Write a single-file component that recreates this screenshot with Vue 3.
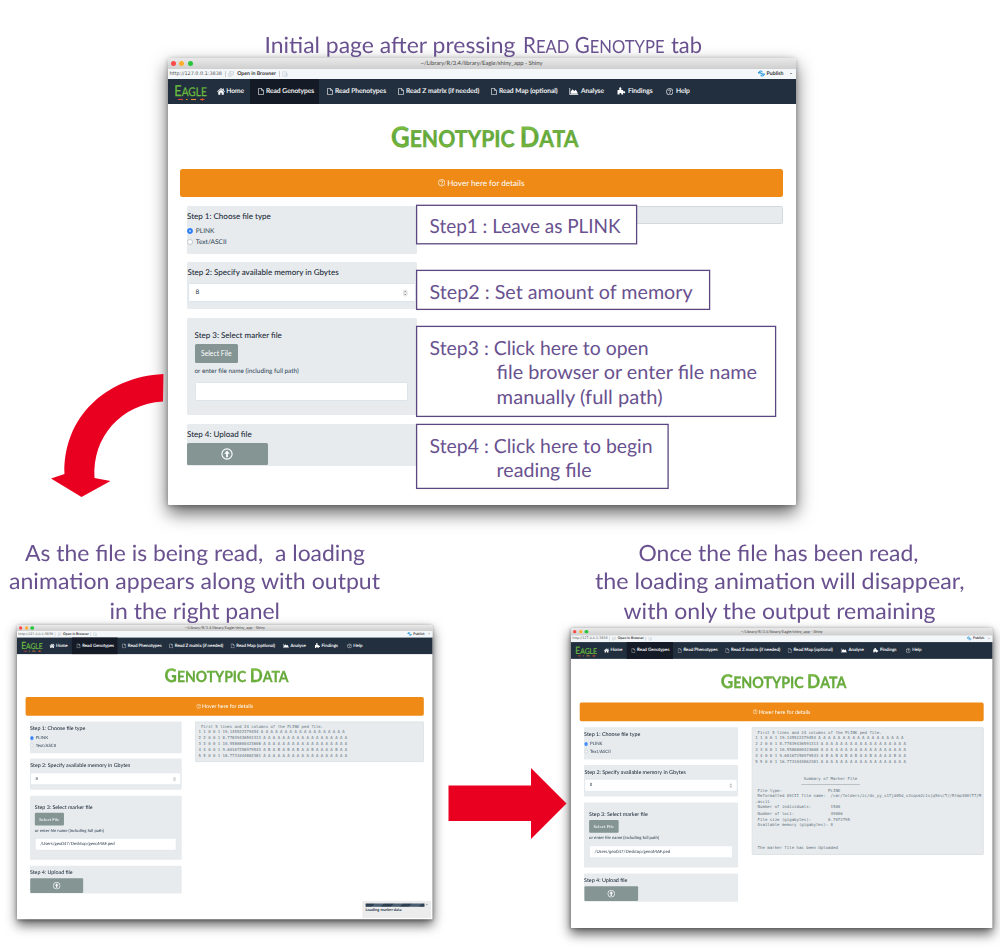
<script setup>
const navItems = [
  { icon: 'home', label: 'Home' },
  { icon: 'file', label: 'Read Genotypes', active: true },
  { icon: 'file', label: 'Read Phenotypes' },
  { icon: 'file', label: 'Read Z matrix (if needed)' },
  { icon: 'file', label: 'Read Map (optional)' },
  { icon: 'chart', label: 'Analyse' },
  { icon: 'puzzle', label: 'Findings' },
  { icon: 'help', label: 'Help' },
]

const head = [
  ' First 5 lines and 24 columns of the PLINK ped file.',
  '1 1 0 0 1 19.145522379454 A A A A A A A A A A A A A A A A A A',
  '2 2 0 0 1 8.77839436591313 A A A A A A A A A A A A A A A A A A',
  '3 3 0 0 1 10.5586800423608 A A A A A A A A A A A A A A A A A A',
  '4 4 0 0 1 9.60167258979543 A B A B A B A B A A B A A A A B A A',
  '5 5 0 0 1 16.7731044862381 A A A A A A A A A A A A A A A A A A',
]
const summary = [
  '',
  '',
  '                    Summary of Marker File',
  '                   ' + '─'.repeat(24),
  ' File type:                   PLINK',
  ' Reformatted ASCII file name:  /var/folders/zc/ds_yy_s17jd05d_s3sqsm2c1xjq5kv/T//Rtmp300tT7/M',
  '.ascii',
  ' Number of individuals:        1500',
  ' Number of loci:               49006',
  ' File size (gigabytes):       0.7072795',
  ' Available memory (gigabytes): 8',
  '',
  '',
  '',
  ' The marker file has been Uploaded',
]

const windows = [
  { id: 'start', path: '', output: '' },
  { id: 'reading', path: '/Users/geo047/Desktop/genoMAF.ped', output: head.join('\n'), loading: true },
  { id: 'done', path: '/Users/geo047/Desktop/genoMAF.ped', output: [...head, ...summary].join('\n') },
]

const captions = [
  { text: 'Initial page after pressing', x: 264.5, y: 52.7, w: 251 },
  { text: 'tab', x: 671, y: 52.7, w: 31 },
  { text: 'As the file is being read,  a loading', x: 25, y: 561, w: 340 },
  { text: 'animation appears along with output', x: 9, y: 589, w: 371 },
  { text: 'in the right panel', x: 109.5, y: 619, w: 170.5 },
  { text: 'Once the file has been read,', x: 638.5, y: 561, w: 280 },
  { text: 'the loading animation will disappear,', x: 595, y: 589, w: 369.5 },
  { text: 'with only the output remaining', x: 623.5, y: 619, w: 312 },
]

const callouts = [
  { x: 416.6, y: 205.3, w: 220, h: 38.5, lines: [{ t: 'Step1 : Leave as PLINK', x: 13, y: 27.5, w: 191 }] },
  { x: 416.6, y: 270.4, w: 293, h: 39, lines: [{ t: 'Step2 : Set amount of memory', x: 13, y: 28.5, w: 263 }] },
  {
    x: 416.6, y: 326.4, w: 359, h: 90,
    lines: [
      { t: 'Step3 : Click here to open', x: 13, y: 28.5, w: 219 },
      { t: 'file browser or enter file name', x: 80, y: 52.4, w: 260.5 },
      { t: 'manually (full path)', x: 80, y: 77.4, w: 166 },
    ],
  },
  {
    x: 416.6, y: 424.4, w: 251.5, h: 64,
    lines: [
      { t: 'Step4 : Click here to begin', x: 13, y: 28.4, w: 223 },
      { t: 'reading file', x: 80, y: 53, w: 95 },
    ],
  },
]
</script>

<template>
  <main class="slide">
    <section v-for="win in windows" :key="win.id" class="window" :class="win.id">
      <header class="titlebar">
        <span class="lights"><i class="red" /><i class="amber" /><i class="green" /></span>
        <span>~/Library/R/3.4/library/Eagle/shiny_app - Shiny</span>
      </header>
      <div class="toolbar">
        <span class="url">http://127.0.0.1:3838</span>
        <i class="sep" />
        <svg class="mini" viewBox="0 0 8 8"><path d="M2 2V1h5v4H5M1 3h3v4H1z" fill="none" stroke="#b5bcc4" stroke-width=".8" /></svg>
        <b>Open in Browser</b>
        <i class="sep" />
        <svg class="mini" viewBox="0 0 8 8"><path d="M1 1h5v6H1zM3 3.5h4v3H3" fill="none" stroke="#c3ccd8" stroke-width=".8" /></svg>
        <span class="publish">
          <svg viewBox="0 0 10 10"><path d="M1.5 3.3C2.5 .8 5.5 .8 6 3.5M4 6.5C4.5 9.500 8 9 8.500 6.700" fill="none" stroke="#2f9bdb" stroke-width="1.500" /><path d="M0 3h4v2H0zM5.500 5H10v1.800H5.500zM4 4.200h2v1.600H4z" fill="#2f9bdb" /></svg>
          <b>Publish</b><i class="caret" />
        </span>
      </div>

      <nav class="nav">
        <svg class="logo" viewBox="0 0 42 25.5">
          <text x="6.300" y="17.300" textLength="32.500" lengthAdjust="spacingAndGlyphs"><tspan font-size="15">E</tspan><tspan font-size="12">AGLE</tspan></text>
          <g stroke-width="1.100"><path d="M10 20.500h5" stroke="#d9483b" /><path d="M18 20.500h1.500" stroke="#f39c12" /><path d="M23 20.500h5" stroke="#e8913a" /><path d="M32 20.500h4.500M34.300 19.200v2.600" stroke="#e0552f" /></g>
        </svg>
        <a v-for="item in navItems" :key="item.label" :class="[item.icon, { active: item.active }]">
          <svg v-if="item.icon === 'home'" viewBox="0 0 16 14"><path d="M8 0L0 7l1 1.200L8 2.300l7 5.900L16 7l-2.500-2.200V1h-2v2zM8 3.600L2.500 8.200V13.500H6.600V9.500h2.800v4h4.100V8.200z" fill="#fff" /></svg>
          <svg v-else-if="item.icon === 'file'" viewBox="0 0 12 14"><path d="M1 .8h6L11 4.800v8.400H1zM7 .8v4h4" fill="none" stroke="#fff" stroke-width="1.200" /></svg>
          <svg v-else-if="item.icon === 'chart'" viewBox="0 0 18 14"><path d="M1 0v13h17" fill="none" stroke="#fff" stroke-width="1.500" /><path d="M3 11.500V7l3.500-4.500L10 6l3-2.500 3 4.500 1 3.500z" fill="#fff" /></svg>
          <svg v-else-if="item.icon === 'puzzle'" viewBox="0 0 16 14"><path d="M1 5.500h3.800C3.500 3 4 .3 6.200.3S9 3 7.800 5.500h3.700v2.700c1.500-1 4-.8 4 1.300s-2.500 2.300-4 1.200V14H8c1-2-.2-3-1.500-3S4 12 5 14H1z" fill="#fff" /></svg>
          <svg v-else viewBox="0 0 14 14"><circle cx="7" cy="7" r="6.200" fill="none" stroke="#fff" stroke-width="1.300" /><path d="M4.800 5.400c.2-2.500 4.600-2.300 4.400.1C9.100 7 7.100 7 7.100 8.700M7.100 10v1.500" fill="none" stroke="#fff" stroke-width="1.500" /></svg>
          <span>{{ item.label }}</span>
        </a>
      </nav>

      <svg class="heading" viewBox="0 0 628 65">
        <defs>
          <linearGradient :id="'leaf-' + win.id" x1="0" y1="0" x2="0" y2="1"><stop offset="0" stop-color="#8ed04b" /><stop offset=".5" stop-color="#5fa637" /><stop offset="1" stop-color="#82c341" /></linearGradient>
        </defs>
        <text x="223" y="42.700" textLength="187.500" lengthAdjust="spacingAndGlyphs" :fill="`url(#leaf-${win.id})`"><tspan class="cap">G</tspan>ENOTYPIC <tspan class="cap">D</tspan>ATA</text>
      </svg>

      <div class="hover">
        <svg viewBox="0 0 14 14"><circle cx="7" cy="7" r="6.200" fill="none" stroke="#fff" stroke-width="1.300" /><path d="M4.800 5.400c.2-2.500 4.600-2.300 4.400.1C9.100 7 7.100 7 7.100 8.700M7.100 10v1.500" fill="none" stroke="#fff" stroke-width="1.500" /></svg>
        Hover here for details
      </div>

      <div class="columns">
        <div class="form">
          <div class="panel p1">
            <h3>Step 1: Choose file type</h3>
            <label><i class="radio on" />PLINK</label>
            <label><i class="radio" />Text/ASCII</label>
          </div>
          <div class="panel p2">
            <h3>Step 2: Specify available memory in Gbytes</h3>
            <div class="field">
              8
              <svg class="spin" viewBox="0 0 6 9"><rect x=".4" y=".4" width="5.200" height="8.200" rx="2.400" fill="#f5f5f5" stroke="#ccc" stroke-width=".6" /><path d="M1.800 3.500L3 2l1.200 1.500M1.800 5.500L3 7l1.200-1.500" fill="none" stroke="#555" stroke-width=".8" /></svg>
            </div>
          </div>
          <div class="panel p3">
            <h3>Step 3: Select marker file</h3>
            <button class="select">Select File</button>
            <p>or enter file name (including full path)</p>
            <div class="field">{{ win.path }}</div>
          </div>
          <div class="panel p4">
            <h3>Step 4: Upload file</h3>
            <button class="upload">
              <svg viewBox="0 0 12 12"><circle cx="6" cy="6" r="5.100" fill="none" stroke="#fff" stroke-width="1.100" /><path d="M6 2.500L3.200 5.700h1.900V9.300h1.800V5.700h1.900z" fill="#fff" /></svg>
            </button>
          </div>
        </div>
        <pre class="output">{{ win.output }}</pre>
      </div>

      <div v-if="win.loading" class="toast">
        <div class="progress"><i /><span>×</span></div>
        <b>Loading marker data</b>
      </div>
    </section>

    <svg class="overlay" viewBox="0 0 1000 952">
      <g class="arrows">
        <path d="M163.500 374C105 377 63 418 64.500 474L51 478.500L81.500 497L110.500 481L94.500 478C92 437 121 404 163 401.500Z" />
        <path d="M448.500 785.500H531V768L566.500 803.500L531 839V821H448.500Z" />
      </g>
      <g class="caption">
        <text v-for="c in captions" :key="c.text" :x="c.x" :y="c.y" :textLength="c.w" lengthAdjust="spacingAndGlyphs">{{ c.text }}</text>
        <text x="523" y="52.700" textLength="141.500" lengthAdjust="spacingAndGlyphs">R<tspan class="small">EAD</tspan> G<tspan class="small">ENOTYPE</tspan></text>
      </g>
      <g v-for="c in callouts" :key="c.y" class="callout" :transform="`translate(${c.x} ${c.y})`">
        <rect :width="c.w" :height="c.h" />
        <text v-for="l in c.lines" :key="l.t" :x="l.x" :y="l.y" :textLength="l.w" lengthAdjust="spacingAndGlyphs">{{ l.t }}</text>
      </g>
    </svg>
  </main>
</template>

<style>
body { margin: 0; background: #fff; }
</style>

<style scoped>
.slide {
  position: relative;
  width: 1000px;
  height: 952px;
  overflow: hidden;
  background: #fff;
  font-family: Lato, "Liberation Sans", sans-serif;
  text-rendering: geometricPrecision;
}
.slide * { box-sizing: border-box; }
.window {
  position: absolute;
  width: 628px;
  height: 447px;
  display: flex;
  flex-direction: column;
  transform-origin: 0 0;
  background: #fff;
  color: #2c3e50;
  border-radius: 3px 3px 1px 1px;
  box-shadow: 0 8px 18px rgba(0, 0, 0, .62), 0 1px 5px rgba(0, 0, 0, .25);
}
.start { left: 167.5px; top: 58px; }
.reading { left: 17px; top: 624.8px; height: 445px; transform: scale(.6615); }
.done { left: 570.7px; top: 628.2px; transform: scale(.671); }
.titlebar {
  position: relative;
  flex: none;
  height: 10.5px;
  display: flex;
  align-items: center;
  justify-content: center;
  border-radius: 3px 3px 0 0;
  background: linear-gradient(#e9e9e9, #cfcfcf);
  font-size: 5.8px;
  color: #444;
}
.reading .titlebar { height: 8.5px; }
.lights { position: absolute; left: 3px; display: flex; gap: 3.5px; }
.lights i { width: 5.2px; height: 5.2px; border-radius: 50%; }
.red { background: #fc4b48; }
.amber { background: #fdae2f; }
.green { background: #29c53a; }
.toolbar {
  flex: none;
  height: 10px;
  display: flex;
  align-items: center;
  gap: 2.9px;
  padding: 0 4px 0 2px;
  background: #f3f7f9;
  font-size: 5.2px;
  color: #333;
}
.url { font-family: "DejaVu Sans", sans-serif; font-size: 4.9px; color: #555; }
.sep { width: .6px; height: 6px; background: #ccc; }
.mini { width: 6px; height: 6px; }
.publish { margin-left: auto; display: flex; align-items: center; gap: 2px; }
.publish svg { width: 7px; height: 7px; }
.caret { margin-left: 4px; border: 1.3px solid transparent; border-top-color: #333; border-bottom: 0; }
.nav {
  flex: none;
  height: 25.5px;
  display: grid;
  grid-template-columns: 41.5px 41px 69px 71px 93px 78.5px 48px 49px 1fr;
  background: #222f3f;
  color: #fff;
}
.logo { width: 42px; height: 25.5px; font-family: Lato, sans-serif; fill: #6abd3e; stroke: #6abd3e; }
.logo text { stroke-width: .25; }
.nav a { display: flex; align-items: center; gap: 2.5px; padding-left: 7.5px; font-size: 6.7px; white-space: nowrap; -webkit-text-stroke: .12px #fff; }
.nav a.active { background: #151b26; }
.nav svg:not(.logo) { flex: none; height: 7px; width: 6px; }
.nav a.home svg { width: 8px; }
.nav a.chart svg { width: 9.5px; }
.nav a.puzzle svg { width: 8.5px; height: 7.8px; }
.nav a.help svg { width: 7.4px; height: 7.4px; }
.heading { flex: none; width: 628px; height: 65px; font-weight: 700; font-size: 23.2px; }
.heading text { stroke: #5b9a35; stroke-width: .4; }
.heading .cap { font-size: 28.2px; }
.nav a.home { gap: 1.8px; padding-left: 7.5px; }
.hover {
  flex: none;
  margin: 0 13px 0 12.5px;
  height: 28px;
  display: flex;
  align-items: center;
  justify-content: center;
  gap: 1.8px;
  border-radius: 2.5px;
  background: #ee8a15;
  color: #fff;
  font-size: 8.15px;
}
.hover svg { width: 7.4px; height: 7.4px; }
.columns { display: flex; align-items: flex-start; gap: 20px; margin: 8.5px 13px 0 19px; }
.form { flex: none; width: 230px; display: flex; flex-direction: column; gap: 8.7px; }
.panel { background: #e7ebee; border-radius: 1.5px; }
.panel h3 { margin: 0; font-size: 8.02px; font-weight: 500; line-height: 10px; color: #1f2d3b; white-space: nowrap; }
.p1 { height: 48px; padding: 5px .5px 0; }
.p1 h3 { margin-bottom: 4.5px; }
.p1 label { display: flex; align-items: center; gap: 3px; height: 11.5px; font-size: 6.6px; }
.radio { width: 5.8px; height: 5.8px; border-radius: 50%; background: #fff; border: .4px solid #c4c8cc; }
.radio.on { background: radial-gradient(#fff 0 20%, #2a7cf6 30%); border-color: #2a7cf6; }
.p2 { height: 47px; padding: 5px 1px 0; }
.p2 .field { margin-top: 6px; }
.field {
  height: 19px;
  display: flex;
  align-items: center;
  padding: 0 7px;
  border: .7px solid #dce4ec;
  border-radius: 1.5px;
  background: #fff;
  font-size: 6.5px;
}
.spin { width: 4.5px; height: 8px; margin-left: auto; }
.p3 { height: 97.5px; padding: 12.5px 8.5px 0 8px; }
.p3 p { margin: 4.2px 0 5.8px; font-size: 6.4px; line-height: 9px; white-space: nowrap; }
button { display: flex; align-items: center; justify-content: center; padding: 0; border: 0; border-radius: 1.5px; background: #849594; color: #fff; font: 6.8px Lato, sans-serif; }
.select { width: 43.5px; height: 19px; margin-top: 3.5px; }
.p4 { height: 42px; padding: 5px .5px 0; }
.upload { width: 80.5px; height: 22.5px; margin-top: 3.5px; }
.upload svg { width: 12px; height: 12px; }
.output {
  flex: 1;
  min-width: 0;
  min-height: 18px;
  margin: 0;
  padding: 4.2px 4.5px 3.800px;
  border: .7px solid #d3dade;
  border-radius: 1.5px;
  background: #e7ebee;
  color: #66737d;
  font: 6.03px/8.6px "DejaVu Sans Mono", monospace;
}
.toast {
  position: absolute;
  right: 2px;
  bottom: 2.5px;
  width: 104px;
  height: 26px;
  padding: 4px 5px;
  background: #ececec;
  font-size: 6px;
}
.progress { display: flex; align-items: center; gap: 2px; height: 6px; margin-bottom: 1.5px; }
.progress i { width: 90px; height: 5px; background: repeating-linear-gradient(135deg, #2c3e50 0 10px, #4b5d70 10px 20px); }
.overlay { position: absolute; inset: 0; width: 1000px; height: 952px; }
.arrows { fill: #e90020; }
.caption { fill: #69518f; font-size: 22.3px; }
.caption text, .callout text { white-space: pre; }
.caption .small { font-size: 18px; }
.callout rect { fill: #fff; stroke: #5c4780; stroke-width: 1.3; }
.callout text { fill: #69518f; font-size: 19.5px; }
</style>
